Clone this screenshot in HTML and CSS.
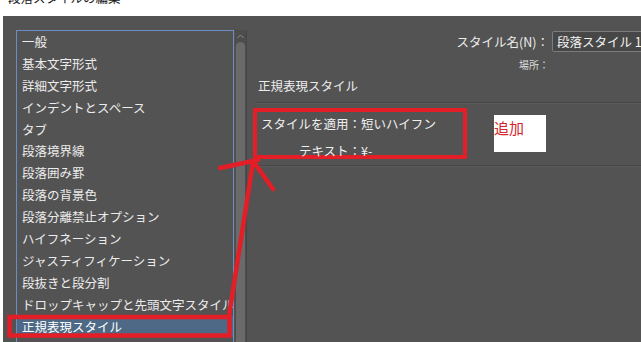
FILE: index.html
```html
<!DOCTYPE html>
<html lang="ja">
<head>
<meta charset="utf-8">
<title>段落スタイルの編集</title>
<link rel="stylesheet" href="styles.css">
</head>
<body>
<div class="titlebar"><span class="title">段落スタイルの編集</span></div>
<div class="dialog">
  <div class="sidebar">
    <ul class="list">
      <li>一般</li>
      <li>基本文字形式</li>
      <li>詳細文字形式</li>
      <li>インデントとスペース</li>
      <li>タブ</li>
      <li>段落境界線</li>
      <li>段落囲み罫</li>
      <li>段落の背景色</li>
      <li>段落分離禁止オプション</li>
      <li>ハイフネーション</li>
      <li>ジャスティフィケーション</li>
      <li>段抜きと段分割</li>
      <li>ドロップキャップと先頭文字スタイル</li>
      <li class="selected">正規表現スタイル</li>
    </ul>
    <div class="scrollbar">
      <div class="scroll-up">
        <svg width="11" height="9" viewBox="0 0 11 9"><path d="M2.5 6 L5.5 3 L8.5 6" fill="none" stroke="#8c8c8c" stroke-width="1"/></svg>
      </div>
      <div class="thumb"></div>
    </div>
  </div>
  <div class="panel">
    <div class="fields">
      <span class="label">スタイル名(N)：</span>
      <div class="input">段落スタイル 1</div>
      <span class="label small">場所：</span>
      <span></span>
    </div>
    <h2 class="section">正規表現スタイル</h2>
    <div class="sep"></div>
    <div class="rule-row">
      <div class="rule">
        <span class="k">スタイルを適用：</span><span class="v">短いハイフン</span>
        <span class="k second">テキスト：</span><span class="v second">¥-</span>
      </div>
      <div class="add">追加</div>
    </div>
    <div class="sep sep2"></div>
  </div>
</div>
<svg class="annot" width="641" height="342" viewBox="0 0 641 342">
  <rect x="9.5" y="317" width="220" height="18.5" fill="none" stroke="#e31e26" stroke-width="4.5"/>
  <path d="M229 316 L253 162" fill="none" stroke="#e31e26" stroke-width="4.5" stroke-linecap="round"/>
  <path d="M220 168 L258 160" fill="none" stroke="#e31e26" stroke-width="4.5" stroke-linecap="round"/>
  <path d="M253 161 L273 189" fill="none" stroke="#e31e26" stroke-width="4.5" stroke-linecap="round"/>
</svg>
</body>
</html>
```
FILE: styles.css
```css
html, body {
  margin: 0;
  padding: 0;
}
body {
  width: 641px;
  height: 342px;
  overflow: hidden;
  background: #ffffff;
  font-family: "Noto Sans CJK JP", "Noto Sans", sans-serif;
  position: relative;
}
.titlebar {
  height: 16px;
  overflow: hidden;
  background: #ffffff;
  padding-left: 8px;
}
.title {
  display: block;
  margin-top: -8px;
  font-size: 12.5px;
  line-height: 12px;
  color: #1a1a1a;
}
.dialog {
  margin-left: 3px;
  height: 326px;
  background: #535353;
  display: flex;
  padding: 14px 0 0 13px;
  box-sizing: border-box;
  overflow: hidden;
}
.sidebar {
  display: flex;
  flex: none;
}
.list {
  list-style: none;
  margin: 0;
  padding: 0;
  width: 218px;
  height: 340px;
  box-sizing: border-box;
  border: 1px solid #6a8ec2;
  background: #535353;
}
.list li {
  height: 21.9px;
  line-height: 21.9px;
  padding-left: 5px;
  font-size: 12.5px;
  color: #ececec;
  white-space: nowrap;
  overflow: hidden;
}
.list li.selected {
  background: #4d6986;
  color: #ffffff;
}
.scrollbar {
  width: 11px;
  border-right: 1px solid #464646;
  background: #4d4d4d;
  display: flex;
  flex-direction: column;
  margin-left: 1px;
}
.scroll-up {
  height: 11px;
  display: flex;
  align-items: center;
  justify-content: center;
  margin-top: 1px;
}
.thumb {
  flex: 1;
  margin: 0 1px;
  background: #6a6a6a;
  border-radius: 5px 5px 0 0;
}
.panel {
  flex: none;
  width: 400px;
  margin-left: 9px;
  padding: 1px 0 0 2px;
  box-sizing: border-box;
  display: flex;
  flex-direction: column;
}
.fields {
  display: grid;
  grid-template-columns: 291px 120px;
  column-gap: 3px;
  align-items: center;
}
.label {
  text-align: right;
  font-size: 12.5px;
  line-height: 21px;
  color: #ececec;
  white-space: nowrap;
}
.label.small {
  font-size: 10px;
  line-height: 14px;
  margin-top: 6px;
  color: #dcdcdc;
}
.input {
  height: 21px;
  box-sizing: border-box;
  border: 1px solid #7c7c7c;
  border-radius: 2px;
  background: #474747;
  color: #f2f2f2;
  font-size: 12.5px;
  line-height: 19px;
  padding-left: 4px;
  white-space: nowrap;
}
.section {
  margin: 6px 0 0 0;
  font-size: 12.5px;
  font-weight: normal;
  line-height: 16px;
  color: #ececec;
}
.sep {
  margin: 8px 0 0 -2px;
  height: 1px;
  background: #464646;
  box-shadow: 0 1px 0 #5b5b5b;
}
.sep2 {
  margin-top: 6px;
}
.rule-row {
  display: flex;
  align-items: flex-start;
  margin: 5px 0 0 -5px;
}
.rule {
  width: 214px;
  height: 51px;
  box-sizing: border-box;
  border: 4px solid #e31e26;
  padding: 3px 0 0 4px;
  display: grid;
  grid-template-columns: auto 1fr;
  grid-auto-rows: 18px;
  row-gap: 9px;
  font-size: 12.5px;
  line-height: 18px;
  color: #f0f0f0;
}
.rule .k {
  text-align: right;
  white-space: nowrap;
}
.rule .v {
  white-space: nowrap;
}
.add {
  margin: 7px 0 0 27px;
  width: 52px;
  height: 37px;
  box-sizing: border-box;
  background: #ffffff;
  color: #d3232b;
  font-size: 15px;
  line-height: 18px;
  padding-top: 4px;
}
.annot {
  position: absolute;
  left: 0;
  top: 0;
  pointer-events: none;
}
```
